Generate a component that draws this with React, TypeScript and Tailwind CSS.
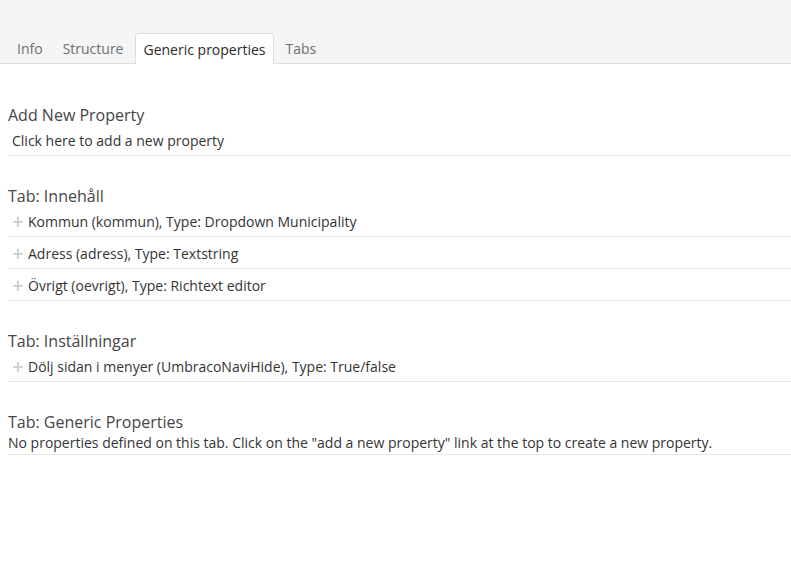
const font = { fontFamily: '"Open Sans", "DejaVu Sans", sans-serif' };

const tabs = ['Info', 'Structure', 'Generic properties', 'Tabs'];

const groups = [
  {
    name: 'Tab: Innehåll',
    props: [
      'Kommun (kommun), Type: Dropdown Municipality',
      'Adress (adress), Type: Textstring',
      'Övrigt (oevrigt), Type: Richtext editor',
    ],
  },
  {
    name: 'Tab: Inställningar',
    props: ['Dölj sidan i menyer (UmbracoNaviHide), Type: True/false'],
  },
];

function MoveIcon() {
  return (
    <svg width="10" height="10" viewBox="0 0 10 10" className="mr-[5px] shrink-0">
      <path d="M5 0.5v9M0.5 5h9" stroke="#c8c8c8" strokeWidth="1.6" />
      <path d="M5 0l1.6 1.8H3.4zM5 10l1.6-1.8H3.4zM0 5l1.8 1.6V3.4zM10 5L8.2 6.6V3.4z" fill="#c8c8c8" />
    </svg>
  );
}

export default function App() {
  return (
    <div className="h-[566px] w-[791px] bg-white text-[14px] text-[#343434]" style={font}>
      <div className="flex h-[64px] items-end border-b border-[#e0e0e0] bg-[#f5f5f5] pl-[9px]">
        {tabs.map((t) =>
          t === 'Generic properties' ? (
            <div
              key={t}
              className="-mb-px mr-[4px] flex h-[31px] items-center rounded-t-[4px] border border-b-0 border-[#dcdcdc] bg-white px-[7px] text-[#2a2a2a]"
            >
              {t}
            </div>
          ) : (
            <div key={t} className="mr-[4px] flex h-[30px] items-center px-[8px] text-[#707070]">
              {t}
            </div>
          ),
        )}
      </div>

      <div className="pl-[8px] pt-[42px]">
        <h3 className="text-[16px] leading-[18px] text-[#454545]">Add New Property</h3>
        <div className="border-b border-[#e9e9e9] px-[4px] pb-[4px] pt-[7px] leading-[20px]">
          Click here to add a new property
        </div>

        {groups.map((g) => (
          <div key={g.name} className="mt-[31px]">
            <h3 className="text-[16px] leading-[18px] text-[#454545]">{g.name}</h3>
            {g.props.map((p) => (
              <div
                key={p}
                className="flex h-[32px] items-center border-b border-[#e9e9e9] pl-[5px] pt-[3px] leading-[20px]"
              >
                <MoveIcon />
                {p}
              </div>
            ))}
          </div>
        ))}

        <div className="mt-[31px]">
          <h3 className="text-[16px] leading-[18px] text-[#454545]">Tab: Generic Properties</h3>
          <div className="border-b border-[#e9e9e9] pb-[1px] pt-[2px] leading-[20px]">
            No properties defined on this tab. Click on the "add a new property" link at the top to create a
            new property.
          </div>
        </div>
      </div>
    </div>
  );
}
